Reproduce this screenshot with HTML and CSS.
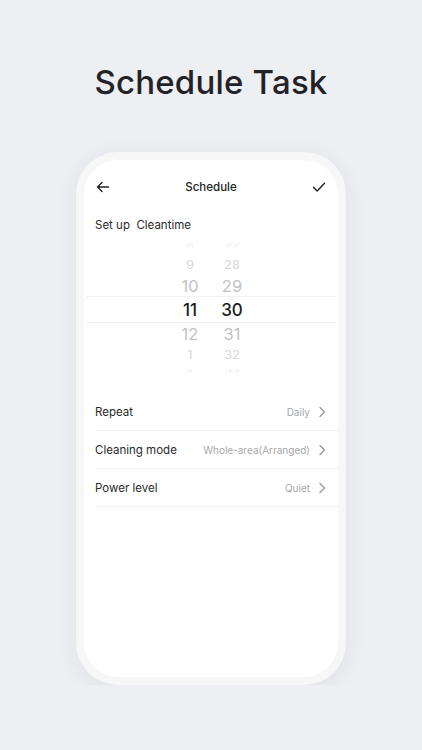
FILE: index.html
```html
<!DOCTYPE html>
<html lang="en">
<head>
  <meta charset="UTF-8" />
  <meta name="viewport" content="width=device-width, initial-scale=1.0" />
  <title>Schedule Task</title>
  <link rel="stylesheet" href="styles.css">
</head>
<body>
  <h1 class="title">Schedule Task</h1>

  <div class="phone">
    <div class="screen">
      <div class="topbar">
        <svg class="icon" width="14" height="14" viewBox="0 0 14 14" fill="none" stroke="#222" stroke-width="1.4" stroke-linecap="round" stroke-linejoin="round">
          <path d="M12.5 7H1.5M6 2.5L1.5 7L6 11.5" />
        </svg>
        <span class="topbar-title">Schedule</span>
        <svg class="icon" width="14" height="14" viewBox="0 0 14 14" fill="none" stroke="#222" stroke-width="1.4" stroke-linecap="round" stroke-linejoin="round">
          <path d="M1.5 7.3L5.2 11L12.5 3.2" />
        </svg>
      </div>

      <p class="setup">Set up&nbsp; Cleantime</p>

      <div class="picker">
        <div class="pick-row far"><span>8</span><span>27</span></div>
        <div class="pick-row near2"><span>9</span><span>28</span></div>
        <div class="pick-row near"><span>10</span><span>29</span></div>
        <div class="pick-row current"><span>11</span><span>30</span></div>
        <div class="pick-row near"><span>12</span><span>31</span></div>
        <div class="pick-row near2"><span>1</span><span>32</span></div>
        <div class="pick-row far last"><span>2</span><span>33</span></div>
      </div>

      <div class="settings">
        <div class="setting">
          <span class="label">Repeat</span>
          <span class="value">Daily</span>
          <svg class="chev" width="8" height="12" viewBox="0 0 8 12" fill="none" stroke="#9a9a9a" stroke-width="1.4" stroke-linecap="round" stroke-linejoin="round"><path d="M2 1.5L6.5 6L2 10.5" /></svg>
        </div>
        <div class="setting">
          <span class="label">Cleaning mode</span>
          <span class="value">Whole-area(Arranged)</span>
          <svg class="chev" width="8" height="12" viewBox="0 0 8 12" fill="none" stroke="#9a9a9a" stroke-width="1.4" stroke-linecap="round" stroke-linejoin="round"><path d="M2 1.5L6.5 6L2 10.5" /></svg>
        </div>
        <div class="setting">
          <span class="label">Power level</span>
          <span class="value">Quiet</span>
          <svg class="chev" width="8" height="12" viewBox="0 0 8 12" fill="none" stroke="#9a9a9a" stroke-width="1.4" stroke-linecap="round" stroke-linejoin="round"><path d="M2 1.5L6.5 6L2 10.5" /></svg>
        </div>
      </div>
    </div>
  </div>
</body>
</html>
```

FILE: styles.css
```css
body {
  margin: 0;
  background-color: #eeeff3;
  font-family: "Inter", "Noto Sans", sans-serif;
  color: #222329;
}
.title {
  margin: 0;
  padding-top: 62px;
  height: 40px;
  line-height: 40px;
  text-align: center;
  font-size: 33px;
  font-weight: 500;
  letter-spacing: 0.2px;
}
.phone {
  width: 254px;
  height: 517px;
  margin: 50px auto 0;
  padding: 8px;
  border-radius: 42px;
  background: #f7f7f8;
  box-shadow: 0 4px 22px rgba(40, 45, 70, 0.07);
}
.screen {
  height: 100%;
  background: white;
  border-radius: 34px;
  overflow: hidden;
}
.topbar {
  height: 54px;
  display: flex;
  align-items: center;
  justify-content: space-between;
  padding: 0 12px;
}
.topbar-title {
  font-size: 11.5px;
  font-weight: 500;
  color: #222;
}
.setup {
  margin: 4px 0 0 11px;
  line-height: 14px;
  font-size: 11.5px;
  color: #2a2a2a;
}
.picker {
  margin: 4px 2px 0;
}
.pick-row {
  display: flex;
  justify-content: center;
  align-items: center;
  gap: 2px;
  height: 21px;
}
.pick-row span {
  width: 40px;
  text-align: center;
}
.far {
  height: 18px;
  font-size: 12px;
  color: #ececec;
}
.far span {
  transform: scaleY(0.35);
}
.last {
  height: 13px;
}
.near2 {
  font-size: 13px;
  color: #d8d8d8;
}
.near2 span {
  transform: scaleY(0.85);
}
.near {
  font-size: 16.5px;
  color: #c2c2c2;
}
.current {
  height: 25px;
  border-top: 1px solid #f0f0f0;
  border-bottom: 1px solid #f0f0f0;
  font-size: 17px;
  font-weight: 500;
  color: #1c1c1c;
}
.settings {
  margin: 15px 0 0 11px;
}
.setting {
  display: flex;
  align-items: center;
  height: 37px;
  padding-right: 12px;
  border-bottom: 1px solid #f1f1f1;
}
.label {
  flex: 1;
  font-size: 11.5px;
  color: #2a2a2a;
}
.value {
  font-size: 10px;
  color: #a8a8a8;
  margin-right: 8px;
}
```
